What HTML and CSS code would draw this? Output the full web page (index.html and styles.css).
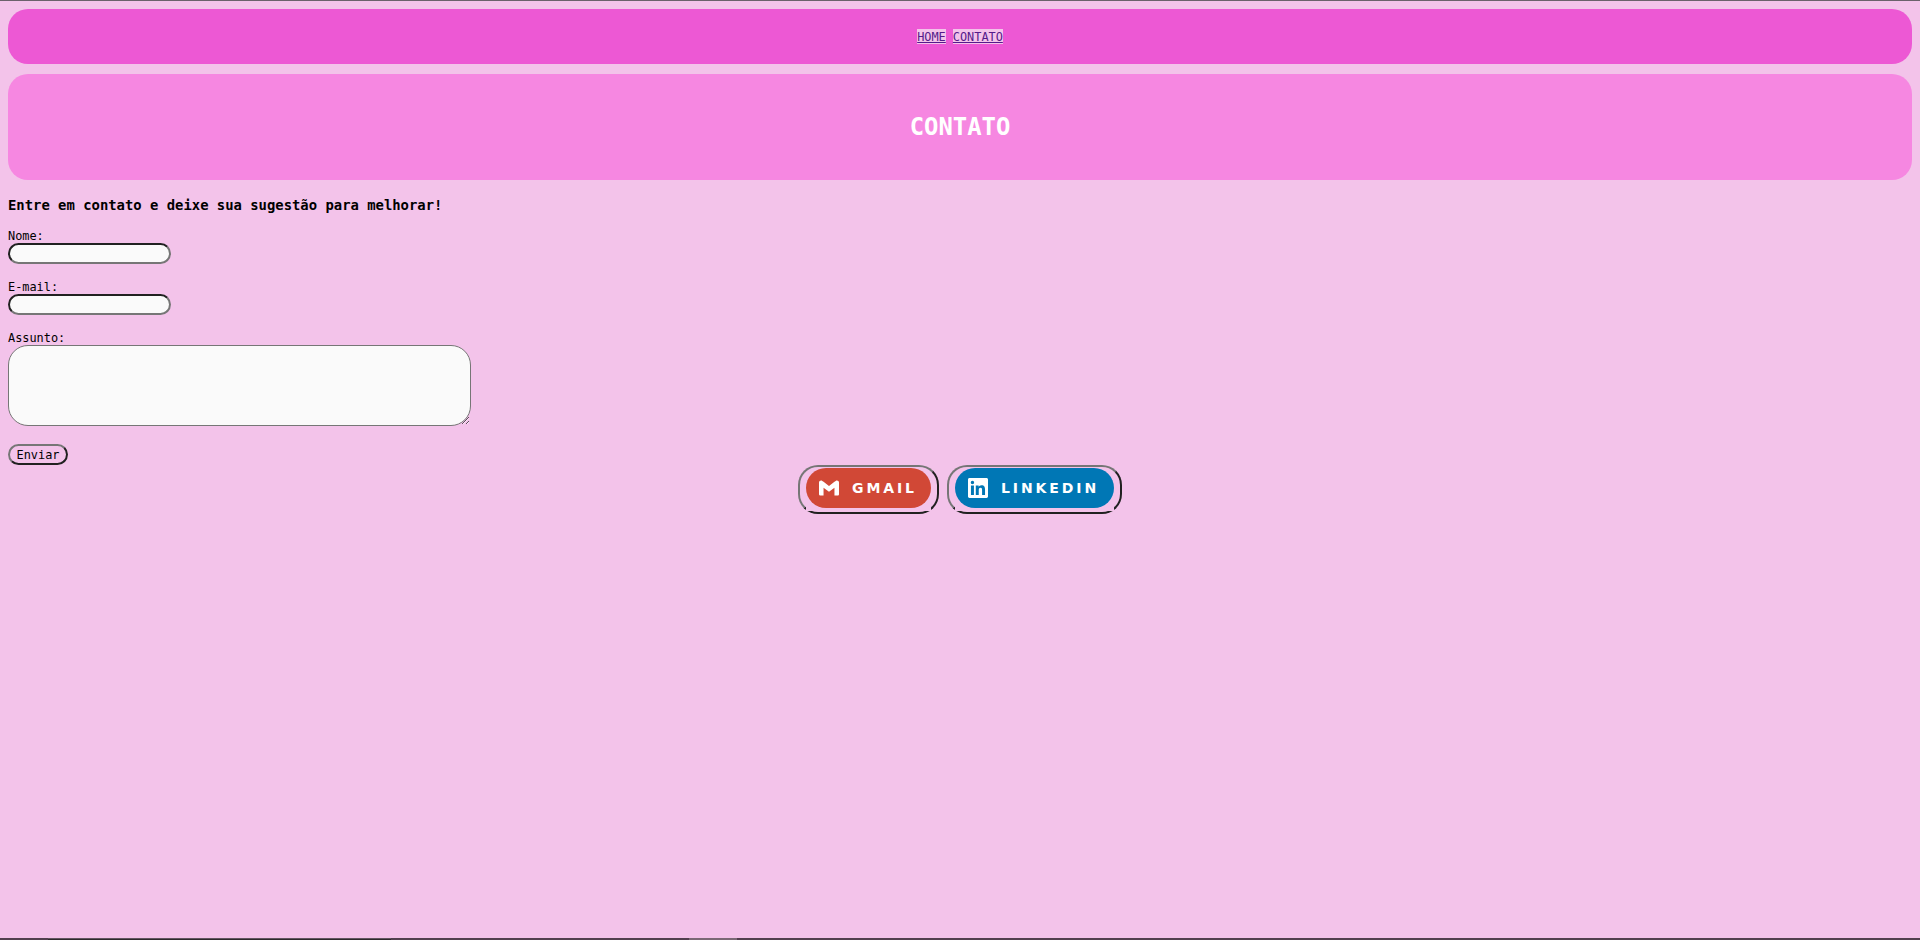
FILE: index.html
```html
<!DOCTYPE html>
<html lang="pt-BR">
<head>
<meta charset="utf-8">
<title>Contato</title>
<link rel="stylesheet" href="styles.css">
</head>
<body>
<div class="top-line"></div>
<nav class="menu"><a class="menu-link" href="#home">HOME</a><a class="menu-link" href="#contato">CONTATO</a></nav>
<header class="banner"><h1 class="banner-title">CONTATO</h1></header>
<main>
<h3 class="lead">Entre em contato e deixe sua sugestão para melhorar!</h3>
<form class="form">
<div class="field"><label class="label" for="nome">Nome:</label><input class="input" id="nome" type="text"></div>
<div class="field"><label class="label" for="email">E-mail:</label><input class="input" id="email" type="text"></div>
<div class="field"><label class="label" for="assunto">Assunto:</label><textarea class="textarea" id="assunto"></textarea></div>
<button class="send" type="button">Enviar</button>
</form>
<div class="social">
<button class="social-button gmail" type="button"><span class="badge"><svg class="icon" viewBox="0 0 24 24"><path fill="#fff" d="M24 5.457v13.909c0 .904-.732 1.636-1.636 1.636h-3.819V11.73L12 16.64l-6.545-4.91v9.273H1.636A1.636 1.636 0 0 1 0 19.366V5.457c0-2.023 2.309-3.178 3.927-1.964L5.455 4.64 12 9.548l6.545-4.91 1.528-1.145C21.69 2.28 24 3.434 24 5.457z"/></svg><span class="badge-text">GMAIL</span></span></button>
<button class="social-button linkedin" type="button"><span class="badge"><svg class="icon" viewBox="0 0 24 24"><path fill="#fff" d="M20.447 20.452h-3.554v-5.569c0-1.328-.027-3.037-1.852-3.037-1.853 0-2.136 1.445-2.136 2.939v5.667H9.351V9h3.414v1.561h.046c.477-.9 1.637-1.85 3.37-1.85 3.601 0 4.267 2.37 4.267 5.455v6.286zM5.337 7.433a2.062 2.062 0 0 1-2.063-2.065 2.064 2.064 0 1 1 2.063 2.065zm1.782 13.019H3.555V9h3.564v11.452zM22.225 0H1.771C.792 0 0 .774 0 1.729v20.542C0 23.227.792 24 1.771 24h20.451C23.2 24 24 23.227 24 22.271V1.729C24 .774 23.2 0 22.222 0h.003z"/></svg><span class="badge-text">LINKEDIN</span></span></button>
</div>
</main>
<footer class="bottom-line"><span class="bottom-dark"></span><span class="bottom-light"></span></footer>
</body>
</html>
```
FILE: styles.css
```css
* { box-sizing: border-box; }
body {
  margin: 0;
  height: 940px;
  padding: 0 8px;
  display: flex;
  flex-direction: column;
  overflow: hidden;
  background: #f3c3ea;
  color: #000;
  font: 11.88px/15px "DejaVu Sans Mono", monospace;
}
main { flex: 1; }
.top-line { height: 1px; margin: 0 -8px 8px; background: #6b616b; }
.menu {
  height: 55px;
  padding-top: 20px;
  display: flex;
  justify-content: center;
  align-items: flex-start;
  gap: 7px;
  border-radius: 20px;
  background: #ed58d4;
}
.menu-link { height: 15px; line-height: 17px; background: #f3c3ea; color: #551a8b; text-decoration: underline; }
.banner {
  height: 106px;
  margin-top: 10px;
  display: flex;
  align-items: center;
  justify-content: center;
  border-radius: 20px;
  background: #f687e1;
}
.banner-title { margin: 0; color: #fff; font-size: 23.9px; line-height: 30px; }
.lead { margin: 15px 0 14px; height: 19px; font-size: 13.88px; line-height: 21px; }
.form { display: flex; flex-direction: column; align-items: flex-start; }
.field { display: flex; flex-direction: column; margin-bottom: 15px; }
.label { height: 15px; line-height: 17px; }
.input {
  width: 163px;
  height: 21px;
  border: 2px inset #767676;
  border-radius: 20px;
  background: #fafafa;
}
.textarea {
  width: 463px;
  height: 81px;
  margin-bottom: 3px;
  border: 1px solid #767676;
  border-radius: 20px;
  background: #fafafa;
}
.send {
  width: 60px;
  height: 21px;
  padding: 1px 0 0;
  border: 2px outset #767676;
  border-radius: 20px;
  background: #f3c3ea;
  font: inherit;
}
.social { display: flex; justify-content: center; gap: 8px; }
.social-button {
  height: 49px;
  padding: 1px 6px 4px;
  border: 2px outset #767676;
  border-radius: 20px;
  background: #f3c3ea;
}
.badge {
  position: relative;
  z-index: 0;
  height: 40px;
  padding: 0 13px;
  display: flex;
  align-items: center;
  gap: 13px;
  color: #fff;
}
.badge::before {
  content: "";
  position: absolute;
  z-index: -2;
  inset: 28px 0 -3px;
  background: #f3c3ea;
}
.badge::after {
  content: "";
  position: absolute;
  z-index: -1;
  inset: 0;
  border-radius: 20px;
}
.gmail .badge { width: 125px; }
.gmail .badge::after { background: #d14836; }
.linkedin .badge { width: 159px; }
.linkedin .badge::after { background: #0077b5; }
.icon { width: 20px; height: 20px; flex: none; }
.badge-text { font: bold 14px/20px "DejaVu Sans", sans-serif; letter-spacing: 2.9px; }
.bottom-line { height: 2px; margin: 0 -8px; display: flex; background: #513f4e; }
.bottom-dark { width: 343px; margin-left: 48px; background: #2e292d; border-top: 1px solid #625560; }
.bottom-light { width: 48px; margin-left: 298px; background: #7a6875; }
```
